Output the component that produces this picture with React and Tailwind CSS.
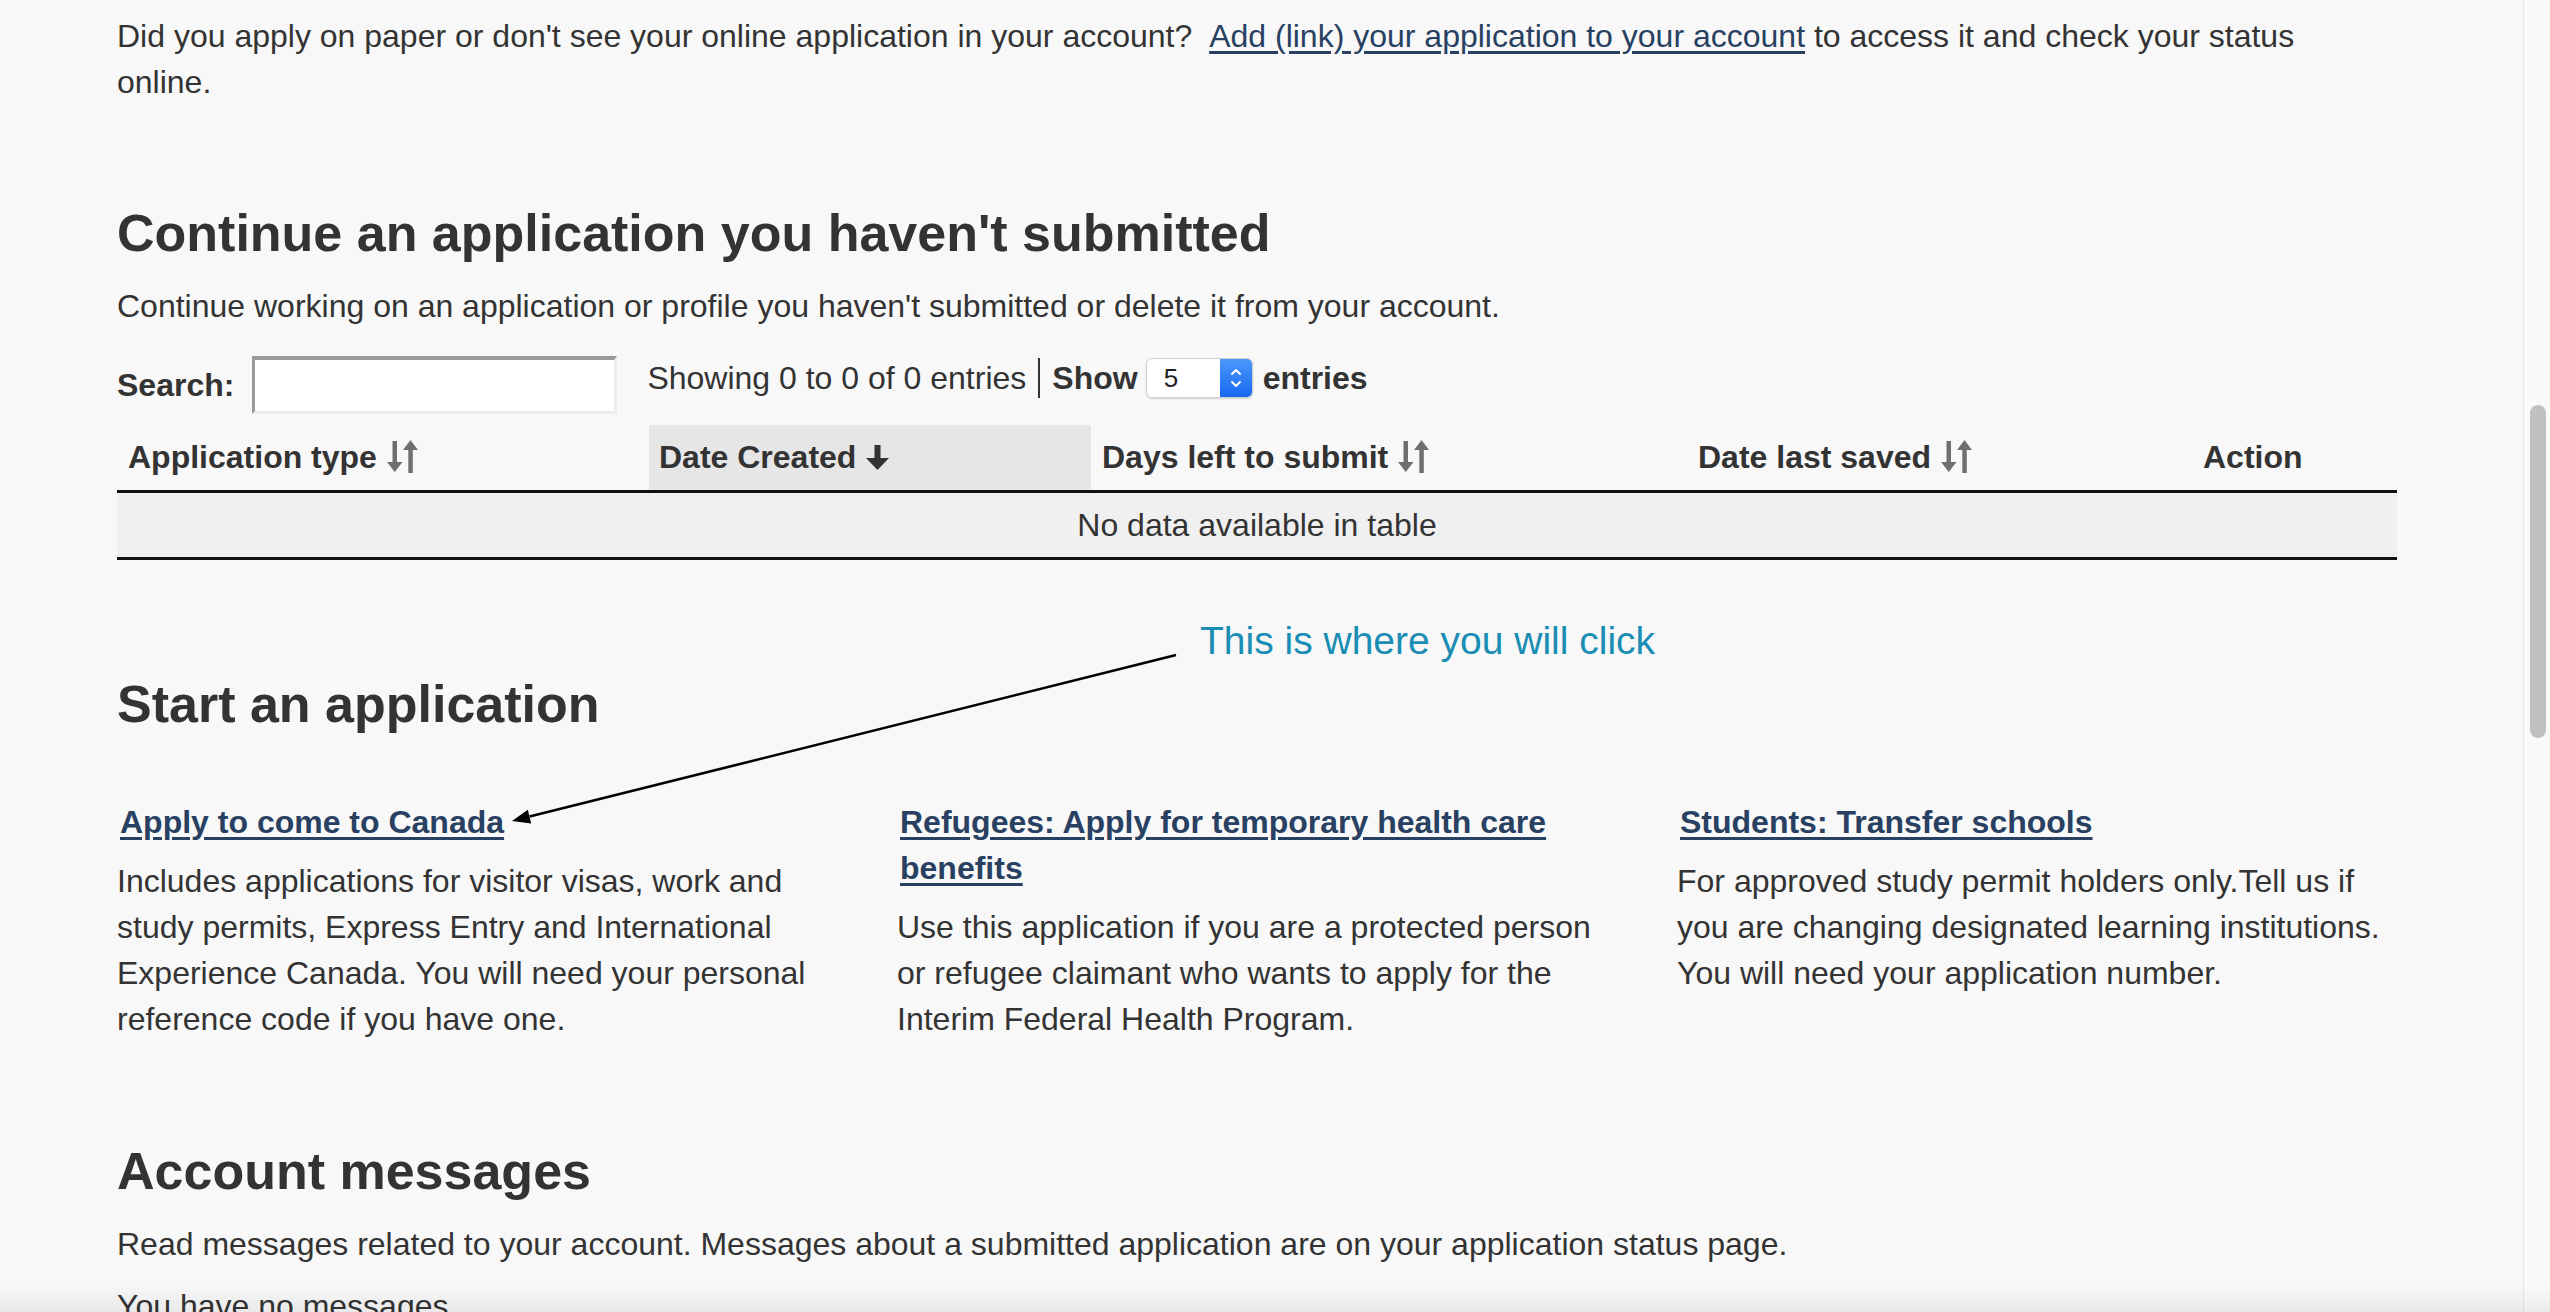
import { ChevronUp, ChevronDown } from "lucide-react";

function SortBoth() {
  return (
    <svg className="inline-block align-middle ml-[10px] -mt-[6px]" width="31" height="33" viewBox="0 0 31 33">
      <rect x="5.5" y="1" width="4.5" height="22" fill="#6f6f6f" />
      <polygon points="0,22 15.5,22 7.75,32" fill="#6f6f6f" />
      <polygon points="16,10 31,10 23.5,0" fill="#6f6f6f" />
      <rect x="21.3" y="9" width="4.5" height="24" fill="#6f6f6f" />
    </svg>
  );
}

function SortDown() {
  return (
    <svg className="inline-block align-middle ml-[10px] -mt-[4px]" width="23" height="25" viewBox="0 0 23 25">
      <rect x="8.5" y="0" width="6" height="14" fill="#333" />
      <polygon points="0,13 23,13 11.5,25" fill="#333" />
    </svg>
  );
}

const starts = [
  {
    title: "Apply to come to Canada",
    text: "Includes applications for visitor visas, work and study permits, Express Entry and International Experience Canada. You will need your personal reference code if you have one.",
  },
  {
    title: "Refugees: Apply for temporary health care benefits",
    text: "Use this application if you are a protected person or refugee claimant who wants to apply for the Interim Federal Health Program.",
  },
  {
    title: "Students: Transfer schools",
    text: "For approved study permit holders only.Tell us if you are changing designated learning institutions. You will need your application number.",
  },
];

export default function App() {
  return (
    <div className="relative flex h-[1312px] w-[2550px] overflow-hidden bg-[#f8f8f8] font-['Liberation_Sans',Arial,sans-serif] text-[32px] leading-[46px] text-[#333]">
      {/* Page */}
      <main className="flex-1">
        <div className="ml-[117px] w-[2280px] pt-[13px]">
          <p className="max-w-[2300px] pr-[40px]">
            Did you apply on paper or don't see your online application in your account?{" "}
            <a href="#" className="ml-[8px] text-[#284162] underline underline-offset-[4px]">
              Add (link) your application to your account
            </a>{" "}
            to access it and check your status online.
          </p>

          {/* Continue */}
          <h2 className="mt-[100px] text-[52px] font-bold leading-[57px]">Continue an application you haven't submitted</h2>
          <p className="mt-[21px]">Continue working on an application or profile you haven't submitted or delete it from your account.</p>

          <div className="mt-[26px] flex items-center">
            <label className="font-bold">Search:</label>
            <input className="ml-[18px] h-[58px] w-[365px] border-[3px] border-t-[4px] border-t-[#9a9a9a] border-l-[#9a9a9a] border-r-[#ececec] border-b-[#ececec] bg-white outline-none" />
            <div className="mb-[14px] ml-[30px] flex items-center">
              <span>Showing 0 to 0 of 0 entries</span>
              <span className="mx-[12px] h-[40px] w-[2px] bg-[#333]" />
              <span className="font-bold">Show</span>
              <div className="ml-[8px] flex h-[40px] w-[107px] overflow-hidden rounded-[6px] border border-[#cfcfcf] bg-white shadow-[0_1px_2px_rgba(0,0,0,0.15)]">
                <span className="flex-1 pl-[17px] text-[26px] leading-[38px] text-[#222]">5</span>
                <span className="flex w-[32px] flex-col items-center justify-center bg-gradient-to-b from-[#4b98f9] to-[#1667f2] text-white">
                  <ChevronUp className="-mb-[4px] h-[16px] w-[16px]" strokeWidth={3} />
                  <ChevronDown className="h-[16px] w-[16px]" strokeWidth={3} />
                </span>
              </div>
              <span className="ml-[10px] font-bold">entries</span>
            </div>
          </div>

          <table className="mt-[10px] w-full table-fixed border-collapse">
            <colgroup>
              <col className="w-[532px]" />
              <col className="w-[442px]" />
              <col className="w-[597px]" />
              <col className="w-[505px]" />
              <col className="w-[204px]" />
            </colgroup>
            <thead>
              <tr className="h-[66px] border-b-[3px] border-[#111] text-left font-bold">
                <th className="px-[11px]">Application type<SortBoth /></th>
                <th className="bg-[#e6e6e6] px-[10px]">Date Created<SortDown /></th>
                <th className="px-[11px]">Days left to submit<SortBoth /></th>
                <th className="px-[10px]">Date last saved<SortBoth /></th>
                <th className="px-[10px]">Action</th>
              </tr>
            </thead>
            <tbody>
              <tr className="h-[67px] border-b-[3px] border-[#111] bg-[#f0f0f0]">
                <td colSpan={5} className="text-center">No data available in table</td>
              </tr>
            </tbody>
          </table>

          {/* Start */}
          <h2 className="mt-[116px] text-[52px] font-bold leading-[57px]">Start an application</h2>
          <div className="mt-[66px] grid grid-cols-3 gap-x-[60px]">
            {starts.map((s) => (
              <div key={s.title}>
                <a href="#" className="block pl-[3px] font-bold text-[#284162] underline underline-offset-[4px]">
                  {s.title}
                </a>
                <p className="mt-[13px]">{s.text}</p>
              </div>
            ))}
          </div>

          {/* Messages */}
          <h2 className="mt-[101px] text-[52px] font-bold leading-[57px]">Account messages</h2>
          <p className="mt-[21px]">Read messages related to your account. Messages about a submitted application are on your application status page.</p>
          <p className="mt-[16px]">You have no messages.</p>
        </div>
      </main>

      {/* Scrollbar */}
      <div className="w-[27px] border-l border-[#e6e6e6] bg-[#fafafa] pt-[405px]">
        <div className="ml-[6px] h-[333px] w-[16px] rounded-full bg-[#c1c1c1]" />
      </div>

      {/* Annotation */}
      <svg className="pointer-events-none absolute left-0 top-0" width="2550" height="1312">
        <line x1="1176" y1="655" x2="529.5" y2="816.6" stroke="#000" strokeWidth="2.6" />
        <polygon points="512,821 531.2,823.4 527.8,809.8" fill="#000" />
      </svg>
      <span className="absolute left-[1200px] top-[618px] text-[39px] leading-[46px] text-[#1a8db5]">This is where you will click</span>

      <div className="pointer-events-none absolute bottom-0 left-0 h-[28px] w-full bg-gradient-to-b from-transparent to-black/[0.06]" />
    </div>
  );
}
